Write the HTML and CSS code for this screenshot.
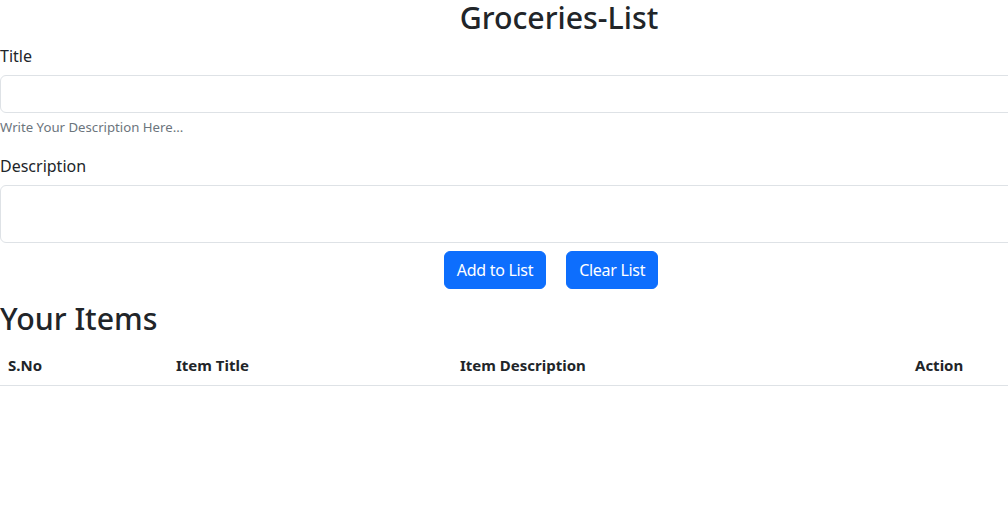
FILE: index.html
```html
<!DOCTYPE html>
<html lang="en">
<head>
<meta charset="utf-8">
<title>Groceries-List</title>
<link rel="stylesheet" href="styles.css">
</head>
<body>
<div class="page">
  <h2 class="page-title">Groceries-List</h2>
  <div class="field">
    <label class="field-label" for="title">Title</label>
    <input class="form-control" id="title" type="text">
    <div class="form-text">Write Your Description Here...</div>
  </div>
  <div class="field">
    <label class="field-label" for="desc">Description</label>
    <textarea class="form-control textarea" id="desc"></textarea>
  </div>
  <div class="actions">
    <button class="btn">Add to List</button>
    <button class="btn">Clear List</button>
  </div>
  <h2 class="section-title">Your Items</h2>
  <table class="table">
    <thead>
      <tr>
        <th class="c1">S.No</th>
        <th class="c2">Item Title</th>
        <th class="c3">Item Description</th>
        <th class="c4">Action</th>
      </tr>
    </thead>
    <tbody></tbody>
  </table>
</div>
</body>
</html>
```
FILE: styles.css
```css
html, body {
  margin: 0;
  padding: 0;
  overflow: hidden;
  background: #fff;
}
body {
  font-family: "Noto Sans", "Open Sans", sans-serif;
  font-size: 16px;
  line-height: 1.5;
  color: #212529;
}
.page {
  width: 1118px;
}
.page-title {
  width: fit-content;
  margin: 0 auto 8px;
  font-size: 30.3px;
  font-weight: 500;
  line-height: 1.2;
}
.field {
  margin-bottom: 16px;
}
.field-label {
  display: block;
  margin-bottom: 7px;
}
.form-control {
  display: block;
  box-sizing: border-box;
  width: 100%;
  height: 38px;
  padding: 6px 12px;
  font: inherit;
  border: 1px solid #dee2e6;
  border-radius: 6px;
  background: #fff;
  margin: 0;
}
.textarea {
  height: 58px;
  margin-top: 1px;
  resize: none;
}
.form-text {
  margin-top: 4px;
  font-size: 13.2px;
  line-height: 21px;
  color: #6c757d;
}
.actions {
  display: flex;
  justify-content: center;
  gap: 20px;
  padding-right: 16px;
  margin-top: -8px;
}
.btn {
  height: 38px;
  padding: 6px 12px;
  font: inherit;
  letter-spacing: -0.3px;
  color: #fff;
  background: #0d6efd;
  border: 1px solid #0d6efd;
  border-radius: 6px;
}
.section-title {
  margin: 12px 0 7px;
  font-size: 30.3px;
  font-weight: 500;
  line-height: 1.2;
}
.table {
  width: 100%;
  border-collapse: collapse;
}
.table th {
  text-align: left;
  font-weight: 700;
  font-size: 15px;
  line-height: 24px;
  padding: 8px;
  border-bottom: 1px solid #dee2e6;
}
.c1 { width: 152px; }
.c2 { width: 268px; }
.c3 { width: 439px; }
```
